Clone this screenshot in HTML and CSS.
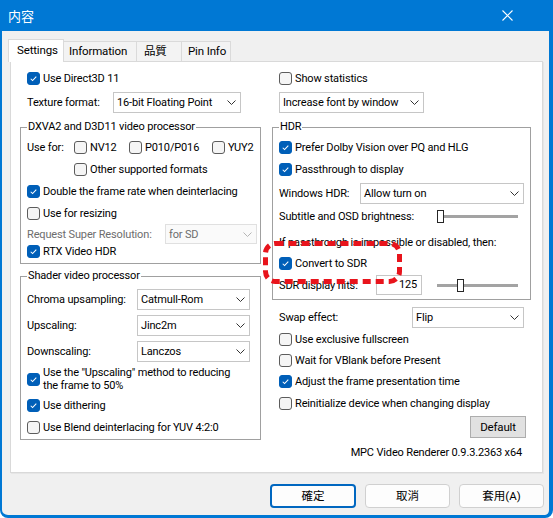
FILE: index.html
```html
<!DOCTYPE html>
<html>
<head>
<meta charset="utf-8">
<title>内容</title>
<link rel="stylesheet" href="styles.css">
</head>
<body>
<div class="window">
  <div class="titlebar">
    <span class="title">内容</span>
    <svg class="close" width="11" height="11" viewBox="0 0 11 11"><path d="M0.5 0.5 L10.5 10.5 M10.5 0.5 L0.5 10.5" stroke="#fff" stroke-width="1.1" fill="none"/></svg>
  </div>
  <div class="client">
    <div class="tabs">
      <div class="tab active w-set">Settings</div>
      <div class="tab w-info">Information</div>
      <div class="tab w-q">品質</div>
      <div class="tab w-pin">Pin Info</div>
    </div>
    <div class="panel">
      <div class="col">
        <div class="row h22 out">
          <div class="cb"><span class="box on"><svg viewBox="0 0 13 13"><path d="M3.2 6.8 L5.4 9 L9.8 4.4"/></svg></span><span>Use Direct3D 11</span></div>
        </div>
        <div class="row h21 out mt3">
          <span class="lbl lw-tex">Texture format:</span>
          <div class="combo cw-tex"><span>16-bit Floating Point</span><svg class="chev" viewBox="0 0 9 5"><path d="M0.5 0.5 L4.5 4.5 L8.5 0.5"/></svg></div>
        </div>
        <fieldset class="group g1">
          <legend>DXVA2 and D3D11 video processor</legend>
          <div class="row h22">
            <span class="lbl lw-use">Use for:</span>
            <div class="cb iw-nv"><span class="box"></span><span>NV12</span></div>
            <div class="cb iw-p10"><span class="box"></span><span>P010/P016</span></div>
            <div class="cb"><span class="box"></span><span>YUY2</span></div>
          </div>
          <div class="row h22 ind-use">
            <div class="cb"><span class="box"></span><span>Other supported formats</span></div>
          </div>
          <div class="row h22">
            <div class="cb"><span class="box on"><svg viewBox="0 0 13 13"><path d="M3.2 6.8 L5.4 9 L9.8 4.4"/></svg></span><span>Double the frame rate when deinterlacing</span></div>
          </div>
          <div class="row h22">
            <div class="cb"><span class="box"></span><span>Use for resizing</span></div>
          </div>
          <div class="row h20">
            <span class="lbl lw-rsr dis">Request Super Resolution:</span>
            <div class="combo cw-rsr disabled"><span>for SD</span><svg class="chev" viewBox="0 0 9 5"><path d="M0.5 0.5 L4.5 4.5 L8.5 0.5"/></svg></div>
          </div>
          <div class="row h14">
            <div class="cb"><span class="box on"><svg viewBox="0 0 13 13"><path d="M3.2 6.8 L5.4 9 L9.8 4.4"/></svg></span><span>RTX Video HDR</span></div>
          </div>
        </fieldset>
        <fieldset class="group g2">
          <legend>Shader video processor</legend>
          <div class="row h21">
            <span class="lbl lw-sh">Chroma upsampling:</span>
            <div class="combo cw-sh"><span>Catmull-Rom</span><svg class="chev" viewBox="0 0 9 5"><path d="M0.5 0.5 L4.5 4.5 L8.5 0.5"/></svg></div>
          </div>
          <div class="row h21 mt5">
            <span class="lbl lw-sh">Upscaling:</span>
            <div class="combo cw-sh"><span>Jinc2m</span><svg class="chev" viewBox="0 0 9 5"><path d="M0.5 0.5 L4.5 4.5 L8.5 0.5"/></svg></div>
          </div>
          <div class="row h21 mt5">
            <span class="lbl lw-sh">Downscaling:</span>
            <div class="combo cw-sh"><span>Lanczos</span><svg class="chev" viewBox="0 0 9 5"><path d="M0.5 0.5 L4.5 4.5 L8.5 0.5"/></svg></div>
          </div>
          <div class="row h26 mt4">
            <div class="cb"><span class="box on"><svg viewBox="0 0 13 13"><path d="M3.2 6.8 L5.4 9 L9.8 4.4"/></svg></span><span class="two">Use the "Upscaling" method to reducing<br>the frame to 50%</span></div>
          </div>
          <div class="row h21 mt3">
            <div class="cb"><span class="box on"><svg viewBox="0 0 13 13"><path d="M3.2 6.8 L5.4 9 L9.8 4.4"/></svg></span><span>Use dithering</span></div>
          </div>
          <div class="row h22">
            <div class="cb"><span class="box"></span><span>Use Blend deinterlacing for YUV 4:2:0</span></div>
          </div>
        </fieldset>
      </div>

      <div class="col">
        <div class="row h22 out">
          <div class="cb"><span class="box"></span><span>Show statistics</span></div>
        </div>
        <div class="row h21 out mt3">
          <div class="combo cw-font"><span>Increase font by window</span><svg class="chev" viewBox="0 0 9 5"><path d="M0.5 0.5 L4.5 4.5 L8.5 0.5"/></svg></div>
        </div>
        <fieldset class="group g3">
          <legend>HDR</legend>
          <div class="row h22">
            <div class="cb"><span class="box on"><svg viewBox="0 0 13 13"><path d="M3.2 6.8 L5.4 9 L9.8 4.4"/></svg></span><span>Prefer Dolby Vision over PQ and HLG</span></div>
          </div>
          <div class="row h22">
            <div class="cb"><span class="box on"><svg viewBox="0 0 13 13"><path d="M3.2 6.8 L5.4 9 L9.8 4.4"/></svg></span><span>Passthrough to display</span></div>
          </div>
          <div class="row h21 mt3">
            <span class="lbl lw-whdr">Windows HDR:</span>
            <div class="combo cw-whdr"><span>Allow turn on</span><svg class="chev" viewBox="0 0 9 5"><path d="M0.5 0.5 L4.5 4.5 L8.5 0.5"/></svg></div>
          </div>
          <div class="row h22 mt1">
            <span class="lbl lw-sub">Subtitle and OSD brightness:</span>
            <div class="slider"><div class="track"></div><div class="thumb th-sub"></div></div>
          </div>
          <div class="row h22 mt4">
            <span>If passthrough is impossible or disabled, then:</span>
          </div>
          <div class="row h20">
            <div class="cb"><span class="box on"><svg viewBox="0 0 13 13"><path d="M3.2 6.8 L5.4 9 L9.8 4.4"/></svg></span><span>Convert to SDR</span></div>
          </div>
          <div class="row h20 mt2">
            <span class="lbl lw-nits">SDR display nits:</span>
            <div class="edit">125</div>
            <div class="slider sl-nits"><div class="track"></div><div class="thumb th-nits"></div></div>
          </div>
        </fieldset>
        <div class="row h21 out mt7">
          <span class="lbl lw-swap">Swap effect:</span>
          <div class="combo cw-swap"><span>Flip</span><svg class="chev" viewBox="0 0 9 5"><path d="M0.5 0.5 L4.5 4.5 L8.5 0.5"/></svg></div>
        </div>
        <div class="row h22 out">
          <div class="cb"><span class="box"></span><span>Use exclusive fullscreen</span></div>
        </div>
        <div class="row h21 out">
          <div class="cb"><span class="box"></span><span>Wait for VBlank before Present</span></div>
        </div>
        <div class="row h21 out">
          <div class="cb"><span class="box on"><svg viewBox="0 0 13 13"><path d="M3.2 6.8 L5.4 9 L9.8 4.4"/></svg></span><span>Adjust the frame presentation time</span></div>
        </div>
        <div class="row h22 out">
          <div class="cb"><span class="box"></span><span>Reinitialize device when changing display</span></div>
        </div>
        <div class="row h22 mt2 end">
          <div class="btn-classic">Default</div>
        </div>
        <div class="row h20 mt4 end ver">
          <span>MPC Video Renderer 0.9.3.2363 x64</span>
        </div>
      </div>
    </div>
    <div class="buttons">
      <div class="btn focus bw-ok">確定</div>
      <div class="btn bw">取消</div>
      <div class="btn bw">套用(A)</div>
    </div>
  </div>
  <svg class="annot" width="142" height="46" viewBox="0 0 142 46"><rect x="3.5" y="3.5" width="134" height="38" rx="10" ry="10" fill="none" stroke="#e8141c" stroke-width="5" stroke-dasharray="8 5"/></svg>
</div>
</body>
</html>
```

FILE: styles.css
```css
* { box-sizing: border-box; }
html, body { margin: 0; padding: 0; }
body {
  width: 553px;
  height: 518px;
  overflow: hidden;
  background: #ffffff;
  font-family: Roboto, "Noto Sans CJK TC", "Liberation Sans", sans-serif;
  font-size: 11px;
  letter-spacing: -0.15px;
  color: #000;
}
.window {
  position: relative;
  width: 553px;
  height: 518px;
  background: #f0f0f0;
  border-left: 2px solid #0078d4;
  border-right: 4px solid #0078d4;
  border-bottom: 3px solid #0078d4;
  border-radius: 0 0 8px 8px;
  display: flex;
  flex-direction: column;
}
.titlebar {
  height: 31px;
  flex: none;
  background: #0078d4;
  display: flex;
  align-items: center;
  justify-content: space-between;
  padding: 0 36px 0 6px;
}
.title {
  color: #fff;
  font-family: "Noto Sans CJK TC", "Noto Sans CJK SC", sans-serif;
  font-size: 13px;
  line-height: 16px;
  letter-spacing: 0;
}
.close { display: block; }
.client {
  flex: 1;
  padding: 8px 5px 0 6px;
  display: flex;
  flex-direction: column;
}
.tabs {
  height: 22px;
  display: flex;
  align-items: flex-end;
}
.tab {
  height: 20px;
  line-height: 18px;
  border: 1px solid #dadada;
  border-bottom: none;
  background: #f3f3f3;
  margin-left: -1px;
  white-space: nowrap;
  font-size: 11.5px;
}
.tab.active {
  position: relative;
  z-index: 1;
  height: 23px;
  margin-bottom: -1px;
  margin-left: 0;
  background: #fff;
  line-height: 21px;
}
.w-set { width: 56px; padding-left: 8px; }
.w-info { width: 74px; padding-left: 5px; }
.w-q { width: 46px; padding-left: 7px; }
.w-pin { width: 50px; padding-left: 6px; }

.panel {
  margin-left: 2px;
  width: 533px;
  height: 412px;
  background: #fff;
  border: 1px solid #d9d9d9;
  box-shadow: 1px 1px 0 #e6e6e6;
  display: grid;
  grid-template-columns: 241px 259px;
  column-gap: 11px;
  padding: 5px 0 0 9px;
  align-items: start;
}
.col {
  display: flex;
  flex-direction: column;
  min-width: 0;
}
.row {
  display: flex;
  align-items: center;
  white-space: nowrap;
  flex: none;
}
.out { margin-left: 7px; }
.end { justify-content: flex-end; }
.h14 { height: 14px; }
.h20 { height: 20px; }
.h21 { height: 21px; }
.h22 { height: 22px; }
.h26 { height: 26px; }
.mt1 { margin-top: 1px; }
.mt2 { margin-top: 2px; }
.mt3 { margin-top: 3px; }
.mt4 { margin-top: 4px; }
.mt5 { margin-top: 5px; }
.mt6 { margin-top: 6px; }
.mt7 { margin-top: 7px; }

.group {
  margin: 0;
  border: 1px solid #a0a0a0;
  padding: 1px 6px 5px 6px;
  min-width: 0;
}
.group legend {
  padding: 0 1px;
  margin-left: 0;
  height: 16px;
  line-height: 16px;
}
.g1 { margin-top: 6px; }
.g2 { margin-top: 4px; padding-top: 5px; padding-bottom: 1px; }
.g3 { margin-top: 6px; padding-bottom: 4px; }

.cb {
  display: flex;
  align-items: center;
  gap: 3px;
}
.box {
  width: 13px;
  height: 13px;
  flex: none;
  border: 1px solid #5c5c5c;
  border-radius: 3px;
  background: #f5f5f5;
  display: block;
}
.box.on {
  background: #005fb8;
  border-color: #005fb8;
}
.box svg {
  display: block;
  width: 11px;
  height: 11px;
  fill: none;
  stroke: #fff;
  stroke-width: 1.2;
}
.two { line-height: 13px; }

.lbl { flex: none; }
.dis { color: #6d6d6d; }
.lw-tex { width: 86px; }
.lw-use { width: 47px; }
.ind-use { padding-left: 47px; }
.iw-nv { width: 55px; }
.iw-p10 { width: 83px; }
.lw-rsr { width: 138px; }
.lw-sh { width: 110px; }
.lw-whdr { width: 81px; }
.lw-sub { width: 158px; }
.lw-nits { width: 97px; }
.lw-swap { width: 133px; }

.combo {
  height: 21px;
  border: 1px solid #c6c6c6;
  background: #fff;
  display: flex;
  align-items: center;
  justify-content: space-between;
  padding: 0 4px 0 3px;
  flex: none;
}
.combo.disabled {
  background: #fafafa;
  border-color: #e0e0e0;
  color: #6d6d6d;
}
.combo.disabled .chev path { stroke: #b5b5b5; }
.h20 .combo { height: 20px; }
.chev {
  width: 9px;
  height: 5px;
  display: block;
}
.chev path { fill: none; stroke: #333; stroke-width: 1; }
.cw-tex { width: 128px; }
.cw-rsr { width: 92px; }
.cw-sh { width: 113px; }
.cw-font { width: 145px; }
.cw-whdr { width: 164px; }
.cw-swap { width: 112px; }

.slider {
  position: relative;
  width: 81px;
  height: 13px;
  flex: none;
  display: flex;
  align-items: center;
}
.sl-nits { margin-left: 15px; }
.track {
  width: 100%;
  height: 3px;
  background: #a3a3a3;
}
.thumb {
  position: absolute;
  top: 0;
  width: 7px;
  height: 13px;
  background: #fff;
  border: 1px solid #262626;
}
.th-sub { left: 0; }
.th-nits { left: 20px; }

.edit {
  width: 46px;
  height: 20px;
  border: 1px solid #c6c6c6;
  background: #fff;
  text-align: right;
  padding-right: 4px;
  line-height: 18px;
  flex: none;
}

.btn-classic {
  width: 56px;
  height: 22px;
  margin-right: 5px;
  background: #e1e1e1;
  border: 1px solid #adadad;
  text-align: center;
  line-height: 20px;
  font-size: 11.5px;
}
.ver { margin-right: 9px; }

.buttons {
  margin-top: 11px;
  display: flex;
  justify-content: flex-end;
  gap: 9px;
}
.btn {
  height: 24px;
  background: #fdfdfd;
  border: 1px solid #d0d0d0;
  border-radius: 4px;
  text-align: center;
  line-height: 22px;
  font-family: Roboto, "Noto Sans CJK TC", sans-serif;
  font-size: 11.5px;
  letter-spacing: 0;
}
.bw { width: 85px; }
.bw-ok { width: 86px; }
.btn.focus {
  border: 2px solid #0067c0;
  line-height: 20px;
}
.annot {
  position: absolute;
  left: 260px;
  top: 240px;
}
```
